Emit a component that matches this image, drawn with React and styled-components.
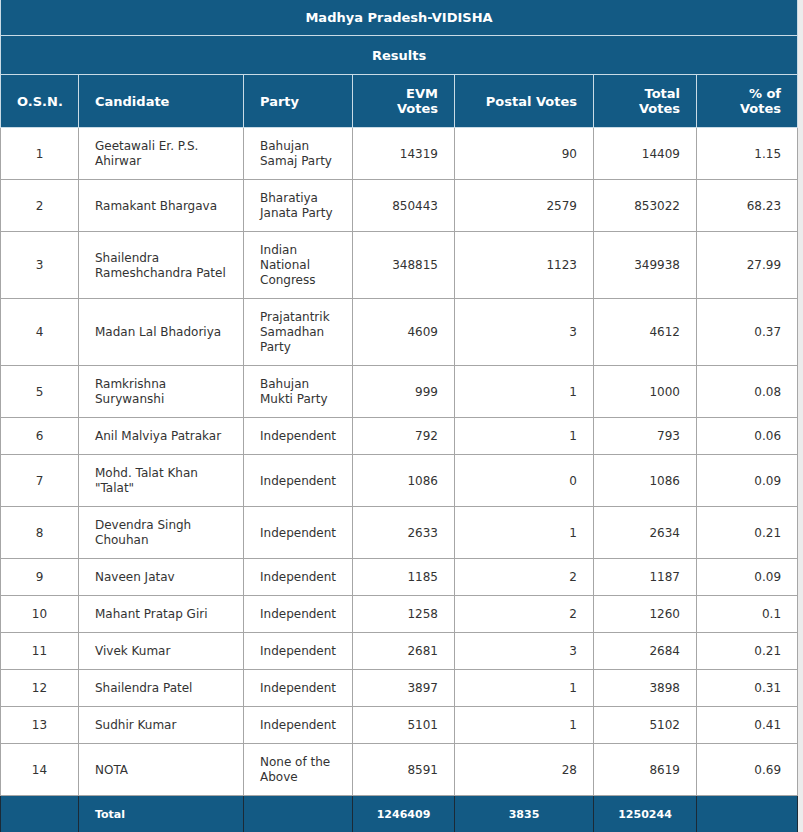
import styled, { createGlobalStyle } from 'styled-components';

const GlobalStyle = createGlobalStyle`
  html, body {
    margin: 0;
    padding: 0;
    background: #ececec;
  }
  body {
    font-family: "DejaVu Sans", Verdana, sans-serif;
  }
`;

const Table = styled.table`
  width: 797px;
  border-collapse: collapse;
  table-layout: fixed;
  background: #fff;
  font-size: 12px;
  line-height: 15px;
  color: #333;
`;

const TitleCell = styled.th`
  background: #135a84;
  color: #fff;
  font-size: 13px;
  font-weight: bold;
  text-align: center;
  height: ${({ $h }) => $h}px;
  padding: 0;
  border: 1px solid #c9dbe6;
  border-top: none;
`;

const HeadCell = styled.th`
  background: #135a84;
  color: #fff;
  font-size: 13px;
  font-weight: bold;
  text-align: ${({ $align }) => $align || 'left'};
  padding: 11px 16px 11px;
  height: 30px;
  border: 1px solid #c9dbe6;
  vertical-align: middle;
`;

const Cell = styled.td`
  padding: 11px 16px 10px;
  border: 1px solid #a6a6a6;
  text-align: ${({ $align }) => $align || 'left'};
  vertical-align: middle;
`;

const FootCell = styled.td`
  background: #135a84;
  color: #fff;
  font-size: 11px;
  font-weight: bold;
  padding: 11px 16px;
  height: 15px;
  border: 1px solid #1b2a36;
  text-align: ${({ $align }) => $align || 'center'};
`;

const rows = [
  ['Geetawali Er. P.S. Ahirwar', 'Bahujan Samaj Party', 14319, 90, 14409, '1.15'],
  ['Ramakant Bhargava', 'Bharatiya Janata Party', 850443, 2579, 853022, '68.23'],
  ['Shailendra Rameshchandra Patel', 'Indian National Congress', 348815, 1123, 349938, '27.99'],
  ['Madan Lal Bhadoriya', 'Prajatantrik Samadhan Party', 4609, 3, 4612, '0.37'],
  ['Ramkrishna Surywanshi', 'Bahujan Mukti Party', 999, 1, 1000, '0.08'],
  ['Anil Malviya Patrakar', 'Independent', 792, 1, 793, '0.06'],
  ['Mohd. Talat Khan "Talat"', 'Independent', 1086, 0, 1086, '0.09'],
  ['Devendra Singh Chouhan', 'Independent', 2633, 1, 2634, '0.21'],
  ['Naveen Jatav', 'Independent', 1185, 2, 1187, '0.09'],
  ['Mahant Pratap Giri', 'Independent', 1258, 2, 1260, '0.1'],
  ['Vivek Kumar', 'Independent', 2681, 3, 2684, '0.21'],
  ['Shailendra Patel', 'Independent', 3897, 1, 3898, '0.31'],
  ['Sudhir Kumar', 'Independent', 5101, 1, 5102, '0.41'],
  ['NOTA', 'None of the Above', 8591, 28, 8619, '0.69'],
];

const widths = [78, 165, 109, 102, 139, 103, 101];

export default function App() {
  return (
    <>
      <GlobalStyle />
      <Table>
        <colgroup>
          {widths.map((w, i) => <col key={i} style={{ width: w }} />)}
        </colgroup>
        <thead>
          <tr>
            <TitleCell colSpan={7} $h={35}>Madhya Pradesh-VIDISHA</TitleCell>
          </tr>
          <tr>
            <TitleCell colSpan={7} $h={38}>Results</TitleCell>
          </tr>
          <tr>
            <HeadCell $align="center">O.S.N.</HeadCell>
            <HeadCell>Candidate</HeadCell>
            <HeadCell>Party</HeadCell>
            <HeadCell $align="right">EVM Votes</HeadCell>
            <HeadCell $align="right">Postal Votes</HeadCell>
            <HeadCell $align="right">Total Votes</HeadCell>
            <HeadCell $align="right">% of Votes</HeadCell>
          </tr>
        </thead>
        <tbody>
          {rows.map((r, i) => (
            <tr key={i}>
              <Cell $align="center">{i + 1}</Cell>
              <Cell>{r[0]}</Cell>
              <Cell>{r[1]}</Cell>
              <Cell $align="right">{r[2]}</Cell>
              <Cell $align="right">{r[3]}</Cell>
              <Cell $align="right">{r[4]}</Cell>
              <Cell $align="right">{r[5]}</Cell>
            </tr>
          ))}
        </tbody>
        <tfoot>
          <tr>
            <FootCell />
            <FootCell $align="left">Total</FootCell>
            <FootCell />
            <FootCell>1246409</FootCell>
            <FootCell>3835</FootCell>
            <FootCell>1250244</FootCell>
            <FootCell />
          </tr>
        </tfoot>
      </Table>
    </>
  );
}
